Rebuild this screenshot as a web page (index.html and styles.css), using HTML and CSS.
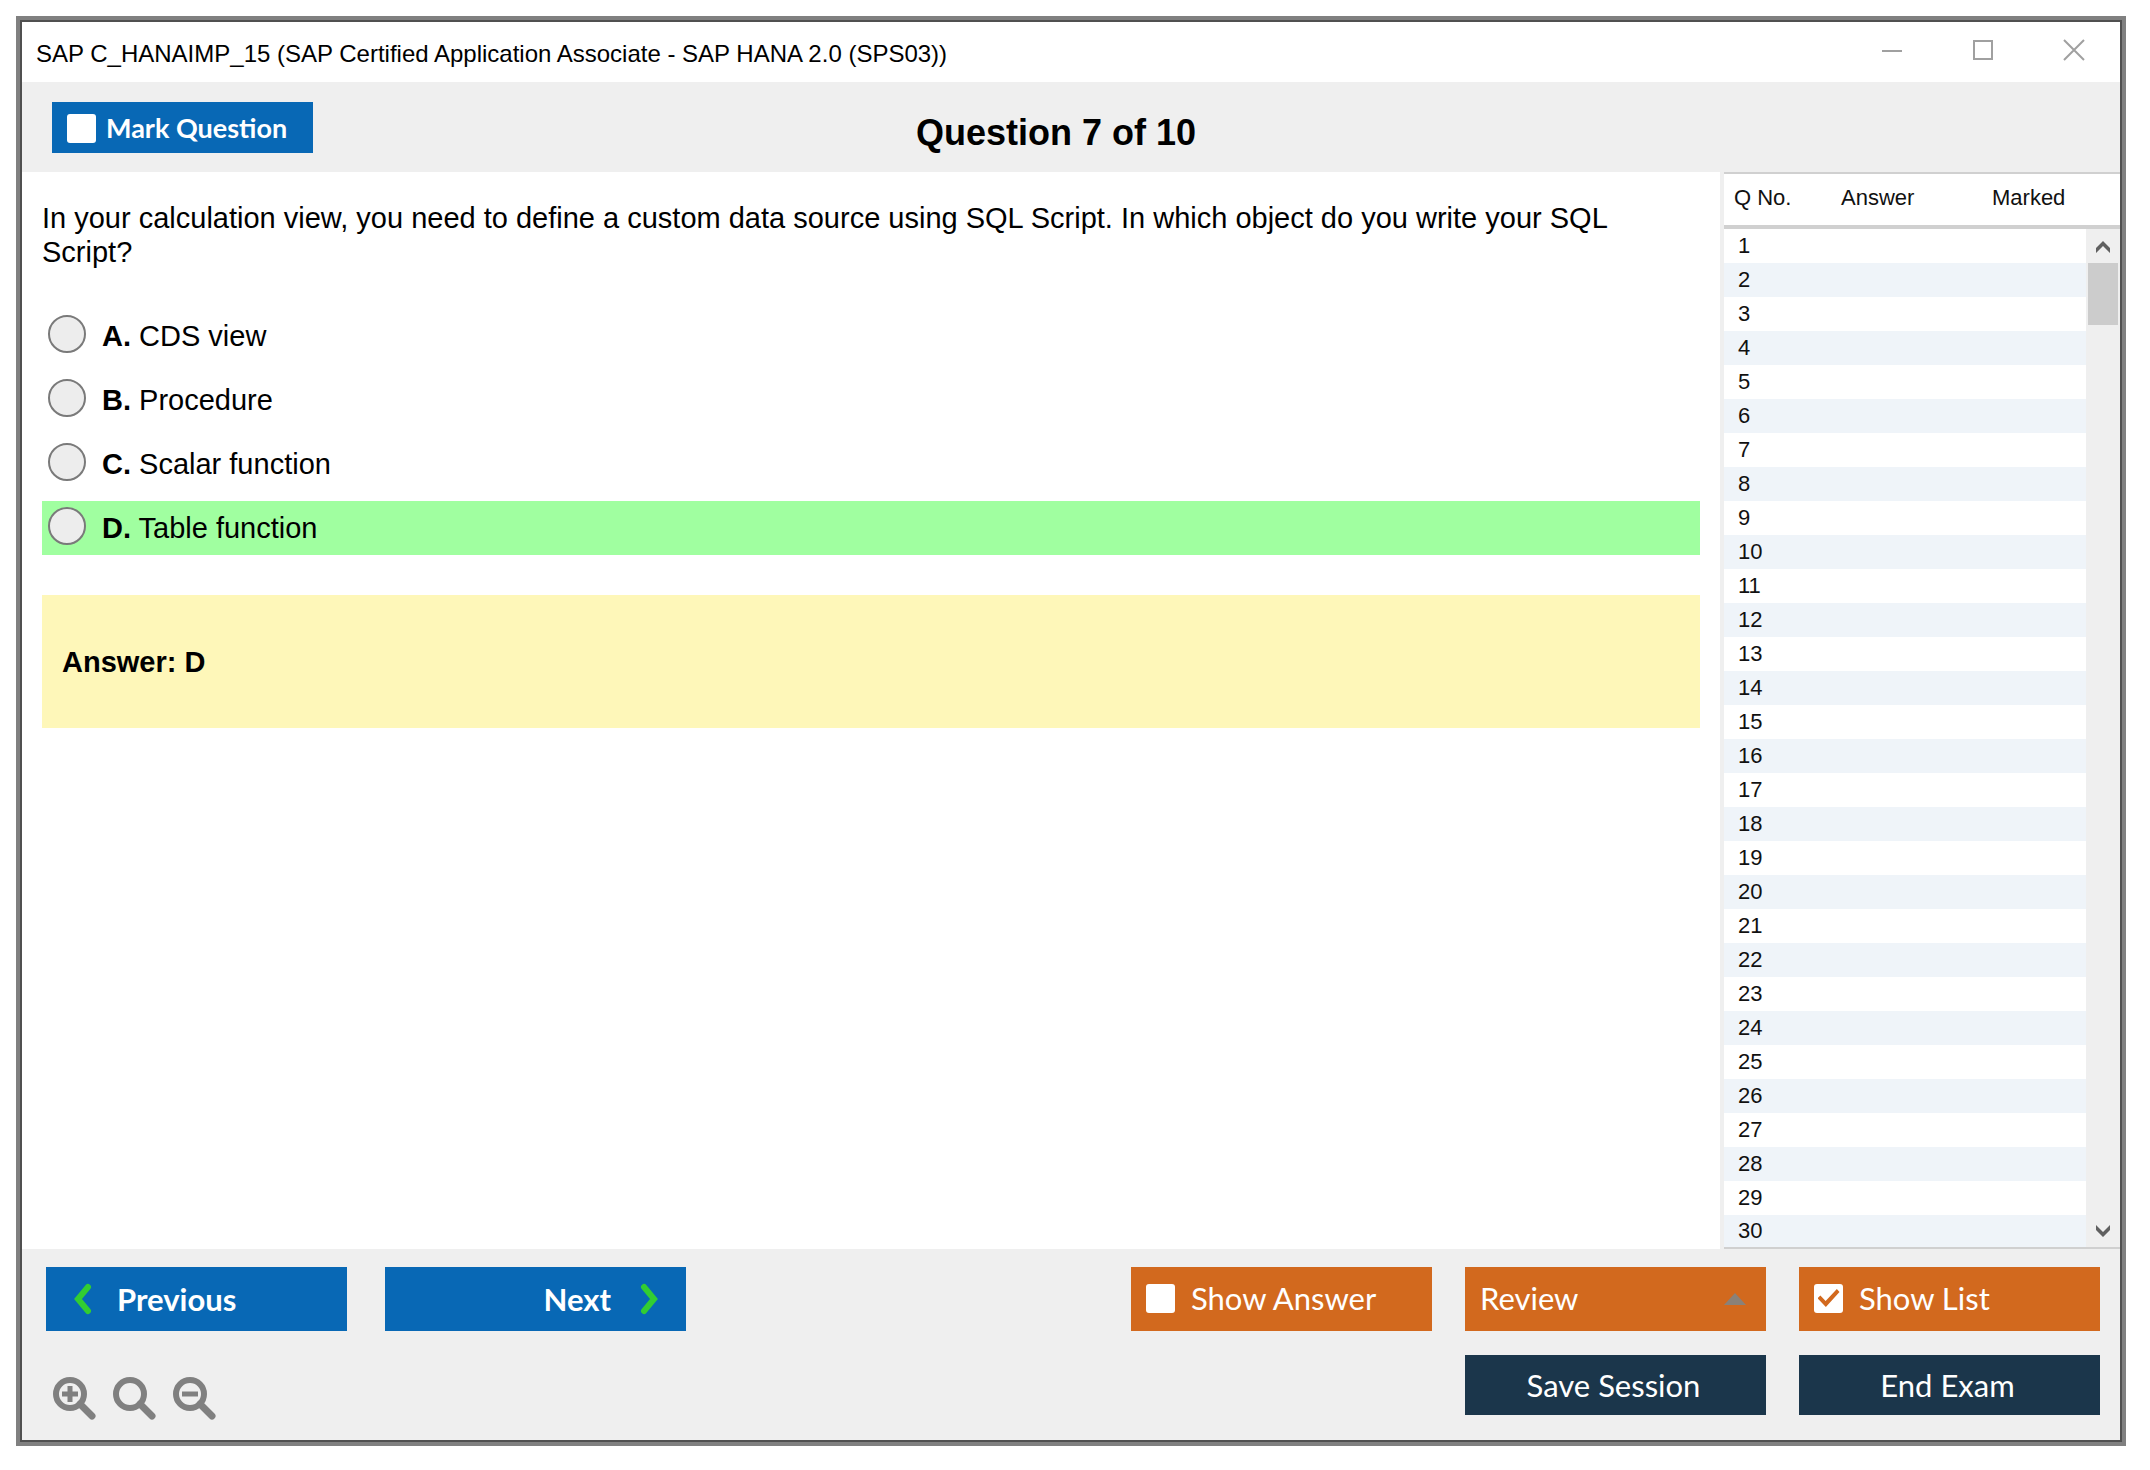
FILE: index.html
```html
<!DOCTYPE html>
<html lang="en">
<head>
<meta charset="utf-8">
<title>SAP C_HANAIMP_15</title>
<link rel="stylesheet" href="styles.css">
</head>
<body>
<div class="window">
  <header class="titlebar">
    <div class="titlebar-text">SAP C_HANAIMP_15 (SAP Certified Application Associate - SAP HANA 2.0 (SPS03))</div>
    <div class="titlebar-controls">
      <button class="win-btn" type="button" aria-label="Minimize"><svg width="22" height="22" viewBox="0 0 22 22"><path d="M1 12H21"/></svg></button>
      <button class="win-btn" type="button" aria-label="Maximize"><svg width="22" height="22" viewBox="0 0 22 22"><path d="M2 2H20V20H2Z"/></svg></button>
      <button class="win-btn" type="button" aria-label="Close"><svg width="22" height="22" viewBox="0 0 22 22"><path d="M1 1L21 21M21 1L1 21"/></svg></button>
    </div>
  </header>

  <div class="exam-bar">
    <label class="mark"><input class="check" type="checkbox">Mark Question</label>
    <h1 class="exam-title">Question 7 of 10</h1>
  </div>

  <div class="main">
    <main class="question">
      <p class="question-text">In your calculation view, you need to define a custom data source using SQL Script. In which object do you write your SQL Script?</p>
      <div class="options">
        <label class="option"><input class="radio" type="radio" name="answer"><span><b>A.</b> CDS view</span></label>
        <label class="option"><input class="radio" type="radio" name="answer"><span><b>B.</b> Procedure</span></label>
        <label class="option"><input class="radio" type="radio" name="answer"><span><b>C.</b> Scalar function</span></label>
        <label class="option option-correct"><input class="radio" type="radio" name="answer"><span><b>D.</b> Table function</span></label>
      </div>
      <div class="answer">Answer: D</div>
    </main>

    <aside class="list">
      <table class="list-table">
        <thead><tr><th class="col-no">Q No.</th><th class="col-answer">Answer</th><th class="col-marked">Marked</th></tr></thead>
        <tbody>
          <tr><td>1</td><td></td><td></td></tr>
          <tr><td>2</td><td></td><td></td></tr>
          <tr><td>3</td><td></td><td></td></tr>
          <tr><td>4</td><td></td><td></td></tr>
          <tr><td>5</td><td></td><td></td></tr>
          <tr><td>6</td><td></td><td></td></tr>
          <tr><td>7</td><td></td><td></td></tr>
          <tr><td>8</td><td></td><td></td></tr>
          <tr><td>9</td><td></td><td></td></tr>
          <tr><td>10</td><td></td><td></td></tr>
          <tr><td>11</td><td></td><td></td></tr>
          <tr><td>12</td><td></td><td></td></tr>
          <tr><td>13</td><td></td><td></td></tr>
          <tr><td>14</td><td></td><td></td></tr>
          <tr><td>15</td><td></td><td></td></tr>
          <tr><td>16</td><td></td><td></td></tr>
          <tr><td>17</td><td></td><td></td></tr>
          <tr><td>18</td><td></td><td></td></tr>
          <tr><td>19</td><td></td><td></td></tr>
          <tr><td>20</td><td></td><td></td></tr>
          <tr><td>21</td><td></td><td></td></tr>
          <tr><td>22</td><td></td><td></td></tr>
          <tr><td>23</td><td></td><td></td></tr>
          <tr><td>24</td><td></td><td></td></tr>
          <tr><td>25</td><td></td><td></td></tr>
          <tr><td>26</td><td></td><td></td></tr>
          <tr><td>27</td><td></td><td></td></tr>
          <tr><td>28</td><td></td><td></td></tr>
          <tr><td>29</td><td></td><td></td></tr>
          <tr><td>30</td><td></td><td></td></tr>
        </tbody>
      </table>
      <div class="scroll">
        <div class="scroll-head"></div>
        <button class="scroll-btn" type="button" aria-label="Scroll up"><svg width="16" height="14" viewBox="0 0 16 14"><path d="M1 8L8 1L15 8V13L8 6L1 13Z"/></svg></button>
        <div class="scroll-thumb"></div>
        <button class="scroll-btn scroll-down" type="button" aria-label="Scroll down"><svg width="16" height="14" viewBox="0 0 16 14"><path d="M1 6L8 13L15 6V1L8 8L1 1Z"/></svg></button>
      </div>
    </aside>
  </div>

  <footer class="footer">
    <div class="footer-left">
      <div class="nav">
        <button class="btn btn-nav" type="button"><svg width="22" height="32" viewBox="0 0 22 32"><path d="M17 4L7 16L17 28"/></svg>Previous</button>
        <button class="btn btn-nav btn-next" type="button">Next<svg width="22" height="32" viewBox="0 0 22 32"><path d="M5 4L15 16L5 28"/></svg></button>
      </div>
      <div class="zoom">
        <button class="zoom-btn" type="button" aria-label="Zoom in"><svg width="44" height="44" viewBox="0 0 44 44"><circle cx="17" cy="17" r="14"/><path class="handle" d="M27 27L39 39"/><path class="sign" d="M9 17H25M17 9V25"/></svg></button>
        <button class="zoom-btn" type="button" aria-label="Reset zoom"><svg width="44" height="44" viewBox="0 0 44 44"><circle cx="17" cy="17" r="14"/><path class="handle" d="M27 27L39 39"/></svg></button>
        <button class="zoom-btn" type="button" aria-label="Zoom out"><svg width="44" height="44" viewBox="0 0 44 44"><circle cx="17" cy="17" r="14"/><path class="handle" d="M27 27L39 39"/><path class="sign" d="M9 17H25"/></svg></button>
      </div>
    </div>
    <div class="actions">
      <label class="btn btn-orange"><input class="check" type="checkbox">Show Answer</label>
      <div class="review">
        <select class="btn btn-orange review-select" aria-label="Review"><option>Review</option></select>
        <svg class="review-arrow" width="22" height="12" viewBox="0 0 22 12"><path d="M11 0L22 12H0Z"/></svg>
      </div>
      <label class="btn btn-orange"><input class="check" type="checkbox" checked>Show List</label>
      <button class="btn btn-dark btn-save" type="button">Save Session</button>
      <button class="btn btn-dark" type="button">End Exam</button>
    </div>
  </footer>
</div>
</body>
</html>
```

FILE: styles.css
```css
* { box-sizing: border-box; }

body {
  margin: 16px 24px 24px 16px;
  background: #fff;
  color: #000;
  font-family: "Liberation Sans", Arial, sans-serif;
}

button, select, input { margin: 0; font: inherit; color: inherit; }

button { padding: 0; border: 0; background: none; }

.window {
  display: flex;
  flex-direction: column;
  min-height: calc(100vh - 40px);
  padding: 2px;
  border: 4px solid #808080;
  background: #505050;
}

/* Title bar */
.titlebar {
  display: flex;
  justify-content: space-between;
  height: 60px;
  background: #fff;
}

.titlebar-text {
  padding: 4px 0 0 14px;
  font-size: 24px;
  line-height: 56px;
}

.titlebar-controls { display: flex; padding-right: 1px; }

.win-btn {
  display: grid;
  place-items: center;
  width: 91px;
  height: 56px;
}

.win-btn svg { fill: none; stroke: #a0a0a0; stroke-width: 2; }

/* Bar with the question counter */
.exam-bar {
  display: grid;
  grid-template-columns: 1fr auto 1fr;
  align-items: center;
  height: 90px;
  padding: 0 60px 0 30px;
  background: #efefef;
}

.mark {
  display: flex;
  align-items: center;
  justify-self: start;
  gap: 10px;
  width: 261px;
  height: 51px;
  padding: 2px 0 0 15px;
  background: #0868b5;
  color: #fff;
  font: bold 27px/36px Lato, sans-serif;
  white-space: nowrap;
}

.exam-title {
  margin: 0;
  padding-top: 12px;
  font-size: 36px;
  line-height: 40px;
}

.check {
  display: grid;
  place-items: center;
  appearance: none;
  flex: none;
  width: 29px;
  height: 29px;
  border-radius: 3px;
  background: #fff;
}

.check:checked::before {
  content: "";
  width: 22px;
  height: 18px;
  background: #d2691e;
  clip-path: polygon(0 52%, 13% 36%, 37% 66%, 88% 0, 100% 16%, 38% 100%);
}

/* Question */
.main {
  display: flex;
  flex: 1;
  background: #fff;
}

.question {
  flex: 1;
  padding: 29px 20px 20px;
  font-size: 29px;
  line-height: 34px;
}

.question-text { margin: 0 0 40px; }

.options {
  display: flex;
  flex-direction: column;
  gap: 10px;
}

.option {
  display: flex;
  gap: 16px;
  height: 54px;
  padding: 6px;
  line-height: 42px;
}

.option-correct { background: #a0ffa0; }

.radio {
  appearance: none;
  flex: none;
  width: 38px;
  height: 38px;
  border: 2px solid #7a7a7a;
  border-radius: 50%;
  background: #ededed;
}

.answer {
  margin-top: 40px;
  padding: 50px 20px 49px;
  background: #fef7b9;
  font-weight: bold;
}

/* Question list */
.list {
  display: flex;
  flex: none;
  width: 400px;
  border-left: 4px solid #efefef;
  font-size: 22px;
  color: #111;
}

.list-table {
  flex: 1;
  align-self: flex-start;
  border-collapse: separate;
  border-spacing: 0;
  table-layout: fixed;
}

.list-table th {
  height: 57px;
  padding: 0 0 4px;
  border-top: 2px solid #d0d0d0;
  border-bottom: 4px solid #d0d0d0;
  font-weight: normal;
  text-align: left;
}

.list-table .col-no { width: 117px; padding-left: 10px; }
.list-table .col-answer { width: 151px; }

.list-table td {
  height: 34px;
  padding: 0 0 0 14px;
  line-height: 34px;
}

.list-table tbody tr:nth-child(even) { background: #eff4f9; }
.list-table tbody tr:last-child td { border-bottom: 2px solid #d0d0d0; line-height: 32px; }

.scroll {
  display: flex;
  flex-direction: column;
  width: 34px;
  background: #efefef;
  border-bottom: 2px solid #d0d0d0;
}

.scroll-head {
  height: 57px;
  border-top: 2px solid #d0d0d0;
  border-bottom: 4px solid #d0d0d0;
  background: #fff;
}

.scroll-btn { height: 34px; }
.scroll-btn svg { display: block; margin: 2px auto 0; fill: #606060; }
.scroll-down { margin-top: auto; }
.scroll-thumb { height: 62px; margin: 0 2px; background: #ccc; }

/* Footer */
.footer {
  display: flex;
  justify-content: space-between;
  align-items: flex-start;
  padding: 18px 20px 19px 24px;
  background: #efefef;
}

.nav { display: flex; gap: 38px; }

.btn {
  display: flex;
  align-items: center;
  width: 301px;
  height: 64px;
  border: 0;
  border-radius: 0;
  color: #fff;
  font: 31px/36px Lato, sans-serif;
  white-space: nowrap;
}

.btn-nav {
  gap: 24px;
  padding: 0 25px;
  background: #0868b5;
  font-weight: bold;
}

.btn-next { justify-content: flex-end; gap: 28px; }

.btn-nav svg {
  fill: none;
  stroke: #32cd32;
  stroke-width: 6;
  stroke-linecap: round;
}

.zoom {
  display: flex;
  gap: 16px;
  padding: 46px 0 0 7px;
}

.zoom-btn svg {
  display: block;
  fill: none;
  stroke: #808080;
  stroke-width: 6;
}

.zoom-btn .handle { stroke-width: 7; stroke-linecap: round; }
.zoom-btn .sign { stroke-width: 5; }

.actions {
  display: grid;
  grid-template-columns: repeat(3, 301px);
  gap: 24px 33px;
}

.btn-orange {
  gap: 16px;
  padding: 0 15px 2px;
  background: #d2691e;
}

.btn-dark {
  justify-content: center;
  height: 60px;
  padding: 0 4px 0 0;
  background: #1b364b;
}

.btn-save { grid-column: 2; }

.review { display: grid; }

.review-select { grid-area: 1 / 1; appearance: none; }

.review-arrow {
  grid-area: 1 / 1;
  place-self: center end;
  margin-right: 20px;
  fill: #8a8178;
  pointer-events: none;
}
```
